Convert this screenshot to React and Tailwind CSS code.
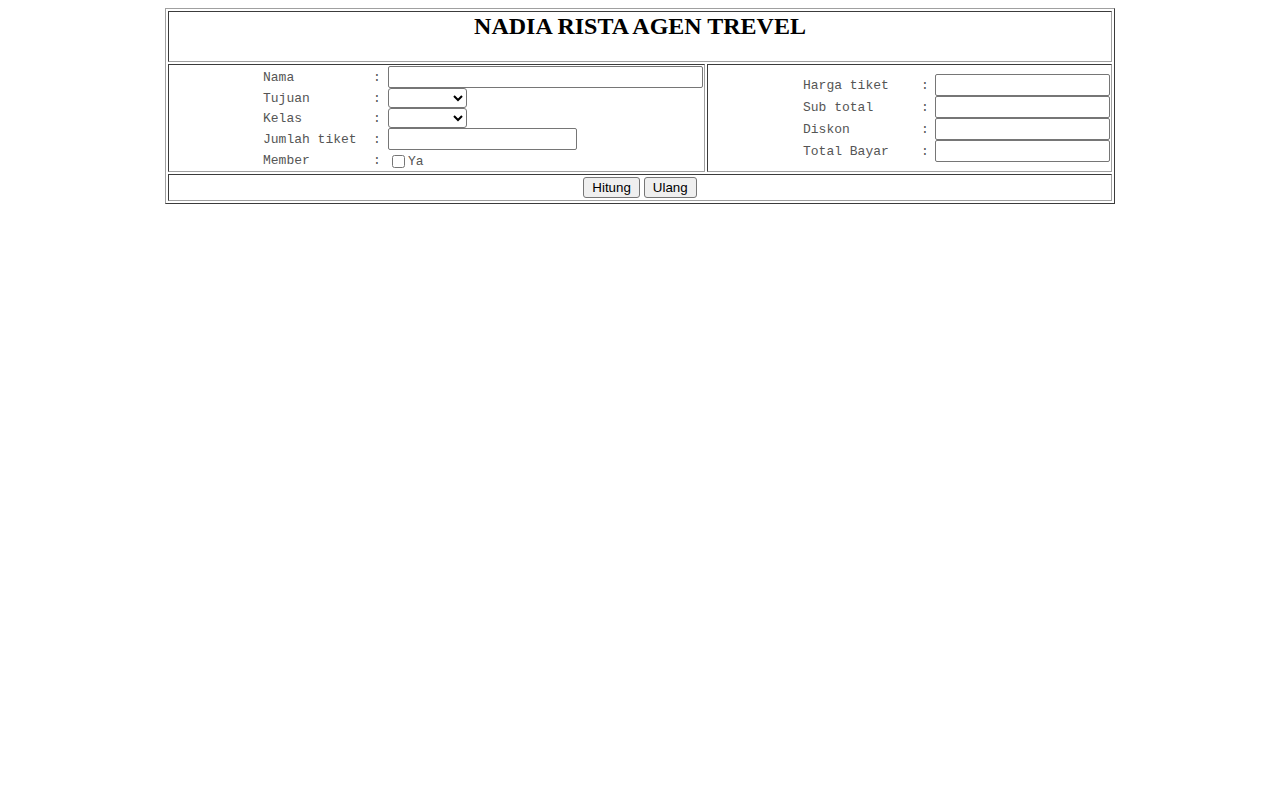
import React from 'react';

const outerBorder = 'border border-t-[#a0a0a0] border-l-[#a0a0a0] border-r-[#3c3c3c] border-b-[#3c3c3c]';
const cellBorder = 'border border-t-[#3c3c3c] border-l-[#3c3c3c] border-r-[#a0a0a0] border-b-[#a0a0a0]';
const inputCls = 'block h-[22px] border border-[#767676] rounded-[2px] bg-white px-[2px] text-[13px]';
const selectCls = 'block h-[20px] w-[79px] border border-[#767676] rounded-[3px] bg-white text-[13px] text-black font-["Liberation_Sans",Arial,sans-serif]';
const btnCls = 'h-[21px] px-[8px] border border-[#767676] rounded-[3px] bg-[#efefef] text-[13.33px] text-black font-["Liberation_Sans",Arial,sans-serif] leading-none';

export default function App() {
    const leftRows = [
        { label: 'Nama', field: <input type="text" className={`${inputCls} w-[315px]`} /> },
        { label: 'Tujuan', field: <select className={selectCls}><option></option></select> },
        { label: 'Kelas', field: <select className={selectCls}><option></option></select> },
        { label: 'Jumlah tiket', field: <input type="text" className={`${inputCls} w-[189px]`} /> },
        {
            label: 'Member',
            field: (
                <label className="flex items-center h-[20px]">
                    <input type="checkbox" className="ml-[4px] mr-[3px] w-[13px] h-[13px] translate-y-[1px]" />
                    <span className="translate-y-[2px]">Ya</span>
                </label>
            ),
        },
    ];

    const rightRows = ['Harga tiket', 'Sub total', 'Diskon', 'Total Bayar'];

    return (
        <div className="bg-white min-h-[800px] pt-2 font-['Liberation_Mono','Courier_New',monospace] text-[13px] text-[#555]">
            <table className={`w-[950px] mx-auto border-separate border-spacing-[2px] ${outerBorder}`}>
                <tbody>
                    {/* Judul */}
                    <tr>
                        <td colSpan={2} className={`${cellBorder} p-[1px] text-center align-top`}>
                            <div className="h-[47px]">
                                <h2 className="m-0 font-['Liberation_Serif','Times_New_Roman',serif] font-bold text-[24px] leading-[26px] text-black">
                                    NADIA RISTA AGEN TREVEL
                                </h2>
                            </div>
                        </td>
                    </tr>

                    {/* Form */}
                    <tr>
                        <td className={`${cellBorder} p-[1px] w-[537px] align-middle`}>
                            <table className="ml-auto border-collapse">
                                <tbody>
                                    {leftRows.map((row) => (
                                        <tr key={row.label}>
                                            <td className="p-0 w-[110px] whitespace-pre align-middle">
                                                <span className="inline-block translate-y-[1px]">{row.label}</span>
                                            </td>
                                            <td className="p-0 w-[15px] align-middle">
                                                <span className="inline-block translate-y-[1px]">:</span>
                                            </td>
                                            <td className="p-0 align-middle">{row.field}</td>
                                        </tr>
                                    ))}
                                </tbody>
                            </table>
                        </td>
                        <td className={`${cellBorder} p-[1px] align-middle`}>
                            <table className="ml-auto border-collapse">
                                <tbody>
                                    {rightRows.map((label) => (
                                        <tr key={label}>
                                            <td className="p-0 w-[118px] whitespace-pre align-middle">
                                                <span className="inline-block translate-y-[1px]">{label}</span>
                                            </td>
                                            <td className="p-0 w-[14px] align-middle">
                                                <span className="inline-block translate-y-[1px]">:</span>
                                            </td>
                                            <td className="p-0 align-middle">
                                                <input type="text" className={`${inputCls} w-[175px]`} />
                                            </td>
                                        </tr>
                                    ))}
                                </tbody>
                            </table>
                        </td>
                    </tr>

                    {/* Tombol */}
                    <tr>
                        <td colSpan={2} className={`${cellBorder} p-[1px] text-center`}>
                            <div className="flex justify-center gap-[4px] py-[1px]">
                                <button className={btnCls}>Hitung</button>
                                <button className={btnCls}>Ulang</button>
                            </div>
                        </td>
                    </tr>
                </tbody>
            </table>
        </div>
    );
}
